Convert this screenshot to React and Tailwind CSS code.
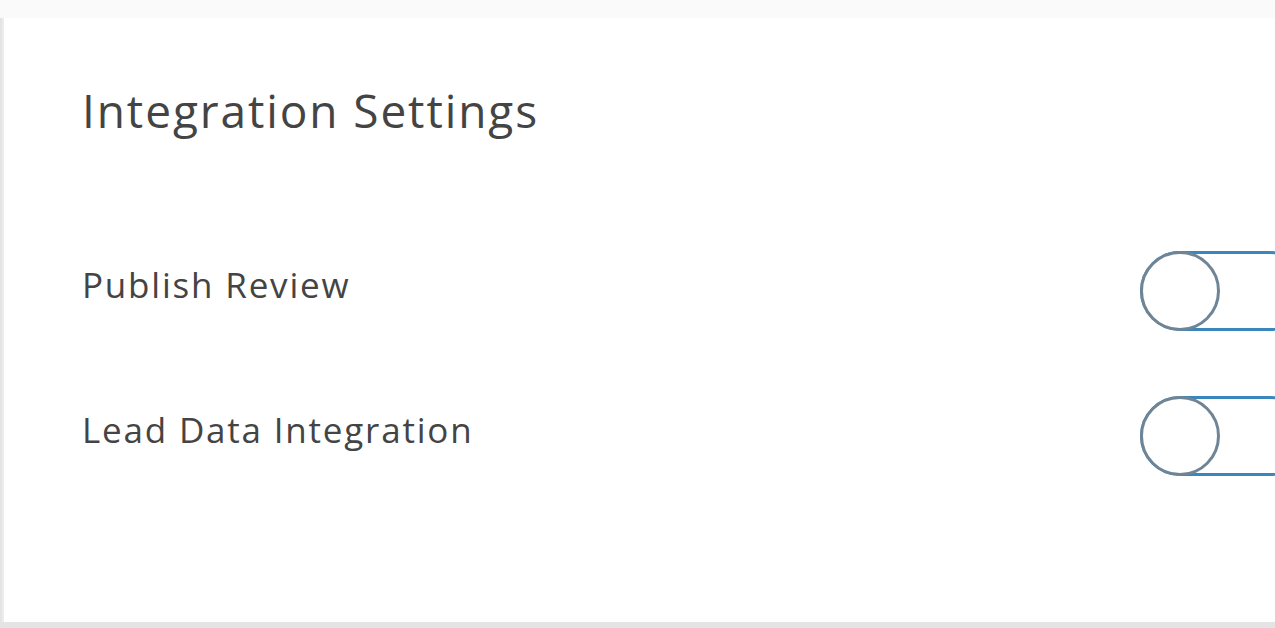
import React from "react";

function Toggle() {
  return (
    <div className="relative h-[80px] w-[170px] shrink-0 rounded-full border-[3px] border-[#3a87bd] bg-white">
      <div className="absolute -left-[3px] -top-[3px] h-[80px] w-[80px] rounded-full border-[3px] border-[#6f8596] bg-white" />
    </div>
  );
}

const rows = ["Publish Review", "Lead Data Integration"];

export default function App() {
  return (
    <div
      className="h-[628px] w-[1275px] overflow-hidden bg-[#e4e4e4]"
      style={{ fontFamily: '"Open Sans", sans-serif' }}
    >
      <div className="h-[18px] bg-[#fafafa]" />
      <div className="ml-[2px] h-[604px] border-l-2 border-[#ececec] bg-white pl-[78px]">
        <h1 className="pt-[64px] text-[46px] leading-[56px] tracking-[1.9px] text-[#444444]">
          Integration Settings
        </h1>
        <div className="mt-[113px] flex flex-col gap-[65px]">
          {rows.map((label) => (
            <div key={label} className="flex items-center justify-between">
              <span className="-mt-[12px] text-[35px] tracking-[1.8px] text-[#444444]">
                {label}
              </span>
              <div className="-mr-[35px]">
                <Toggle />
              </div>
            </div>
          ))}
        </div>
      </div>
    </div>
  );
}
